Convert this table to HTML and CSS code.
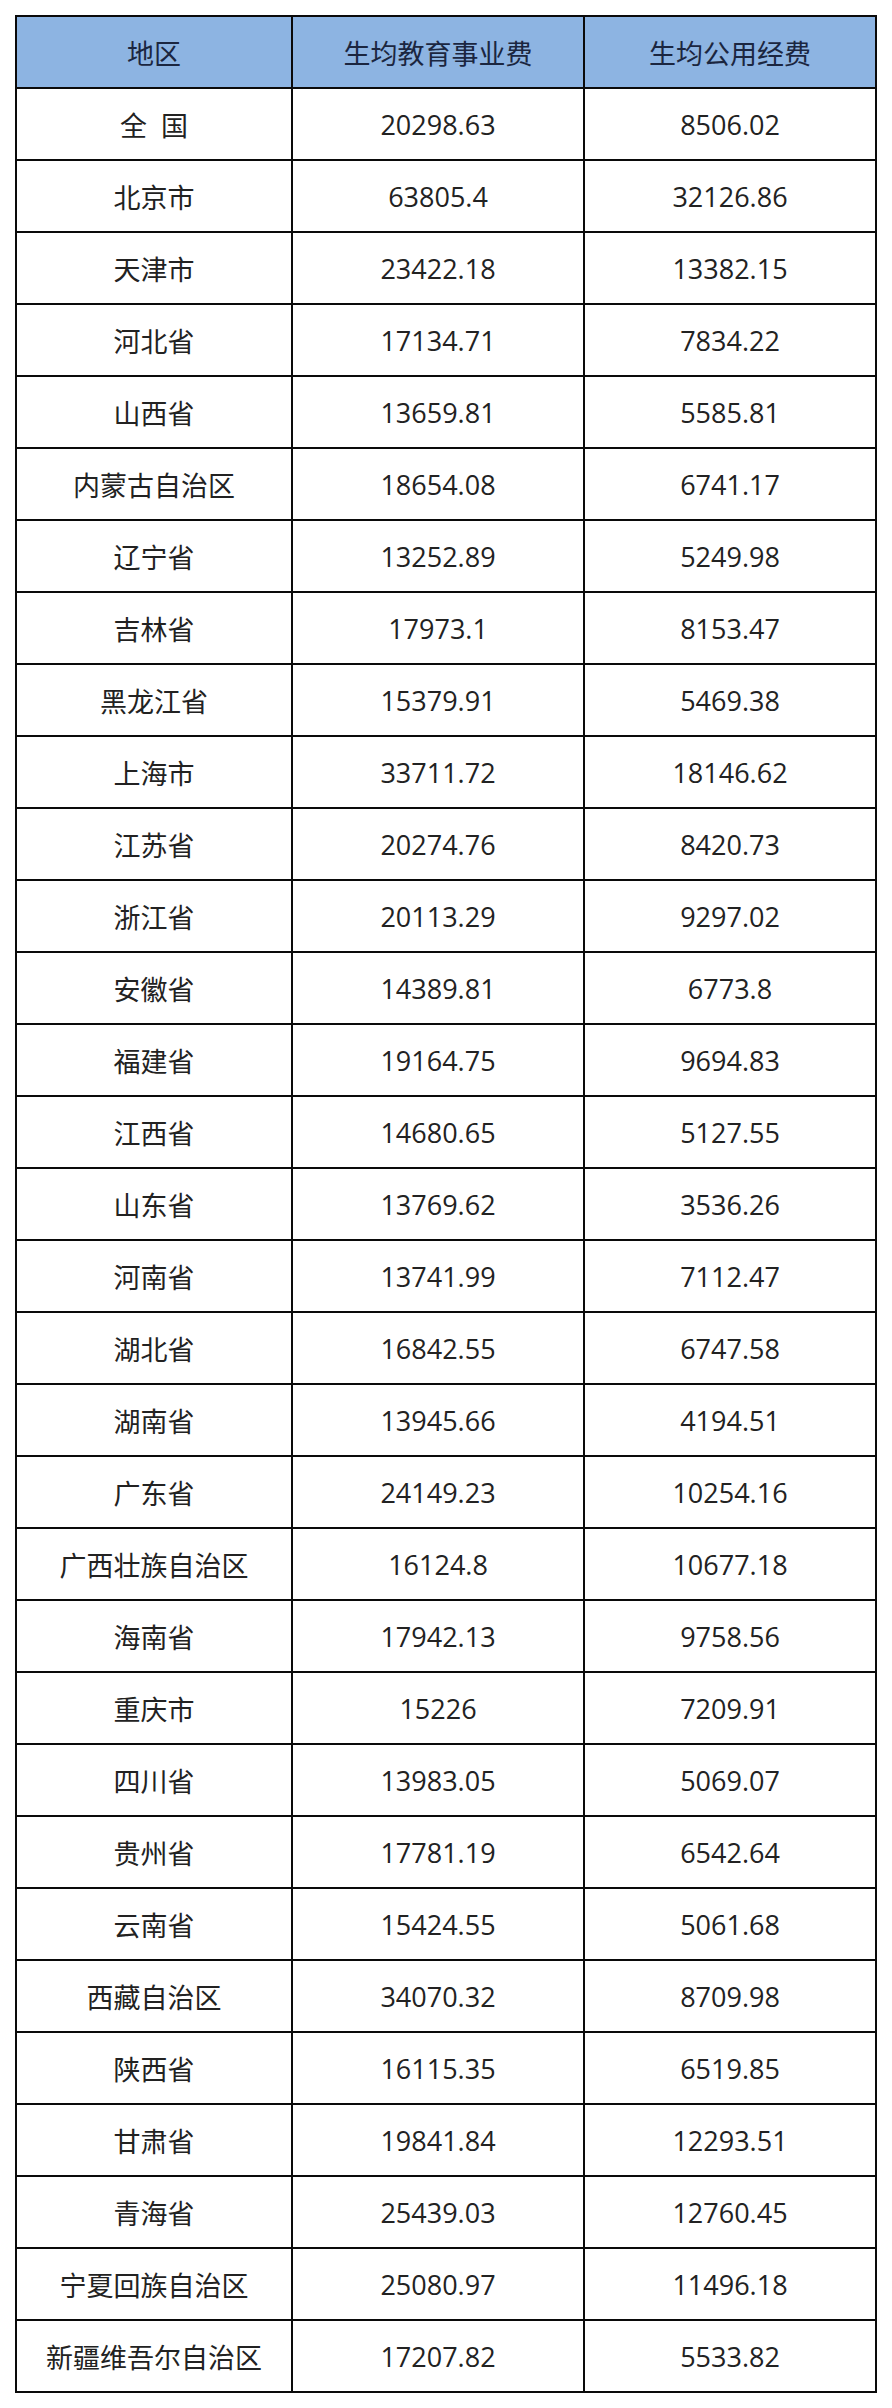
FILE: index.html
```html
<!DOCTYPE html>
<html lang="zh-CN">
<head>
<meta charset="utf-8">
<link rel="stylesheet" href="styles.css">
</head>
<body>
<table class="data">
<thead>
<tr><th class="c1">地区</th><th class="c2">生均教育事业费</th><th class="c3">生均公用经费</th></tr>
</thead>
<tbody>
<tr><td>全&nbsp;&nbsp;国</td><td>20298.63</td><td>8506.02</td></tr>
<tr><td>北京市</td><td>63805.4</td><td>32126.86</td></tr>
<tr><td>天津市</td><td>23422.18</td><td>13382.15</td></tr>
<tr><td>河北省</td><td>17134.71</td><td>7834.22</td></tr>
<tr><td>山西省</td><td>13659.81</td><td>5585.81</td></tr>
<tr><td>内蒙古自治区</td><td>18654.08</td><td>6741.17</td></tr>
<tr><td>辽宁省</td><td>13252.89</td><td>5249.98</td></tr>
<tr><td>吉林省</td><td>17973.1</td><td>8153.47</td></tr>
<tr><td>黑龙江省</td><td>15379.91</td><td>5469.38</td></tr>
<tr><td>上海市</td><td>33711.72</td><td>18146.62</td></tr>
<tr><td>江苏省</td><td>20274.76</td><td>8420.73</td></tr>
<tr><td>浙江省</td><td>20113.29</td><td>9297.02</td></tr>
<tr><td>安徽省</td><td>14389.81</td><td>6773.8</td></tr>
<tr><td>福建省</td><td>19164.75</td><td>9694.83</td></tr>
<tr><td>江西省</td><td>14680.65</td><td>5127.55</td></tr>
<tr><td>山东省</td><td>13769.62</td><td>3536.26</td></tr>
<tr><td>河南省</td><td>13741.99</td><td>7112.47</td></tr>
<tr><td>湖北省</td><td>16842.55</td><td>6747.58</td></tr>
<tr><td>湖南省</td><td>13945.66</td><td>4194.51</td></tr>
<tr><td>广东省</td><td>24149.23</td><td>10254.16</td></tr>
<tr><td>广西壮族自治区</td><td>16124.8</td><td>10677.18</td></tr>
<tr><td>海南省</td><td>17942.13</td><td>9758.56</td></tr>
<tr><td>重庆市</td><td>15226</td><td>7209.91</td></tr>
<tr><td>四川省</td><td>13983.05</td><td>5069.07</td></tr>
<tr><td>贵州省</td><td>17781.19</td><td>6542.64</td></tr>
<tr><td>云南省</td><td>15424.55</td><td>5061.68</td></tr>
<tr><td>西藏自治区</td><td>34070.32</td><td>8709.98</td></tr>
<tr><td>陕西省</td><td>16115.35</td><td>6519.85</td></tr>
<tr><td>甘肃省</td><td>19841.84</td><td>12293.51</td></tr>
<tr><td>青海省</td><td>25439.03</td><td>12760.45</td></tr>
<tr><td>宁夏回族自治区</td><td>25080.97</td><td>11496.18</td></tr>
<tr><td>新疆维吾尔自治区</td><td>17207.82</td><td>5533.82</td></tr>
</tbody>
</table>
</body>
</html>
```

FILE: styles.css
```css
html, body {
  margin: 0;
  padding: 0;
  background: #ffffff;
}
body {
  padding: 15px 0 0 15px;
  font-family: "Open Sans", "Noto Sans CJK SC", sans-serif;
}
.data {
  border-collapse: separate;
  border-spacing: 0;
  border-left: 2px solid #0a0a0a;
  border-top: 2px solid #0a0a0a;
  table-layout: fixed;
  width: 862px;
}
.data th, .data td {
  border-right: 2px solid #0a0a0a;
  border-bottom: 2px solid #0a0a0a;
  height: 70px;
  padding: 0;
  text-align: center;
  vertical-align: middle;
  font-size: 27px;
  font-weight: normal;
  color: #222222;
  white-space: nowrap;
  box-sizing: content-box;
}
.data th {
  background: #8db4e2;
  color: #1b2640;
}
.c1 { width: 274px; }
.c2 { width: 290px; }
.c3 { width: 290px; }
```
